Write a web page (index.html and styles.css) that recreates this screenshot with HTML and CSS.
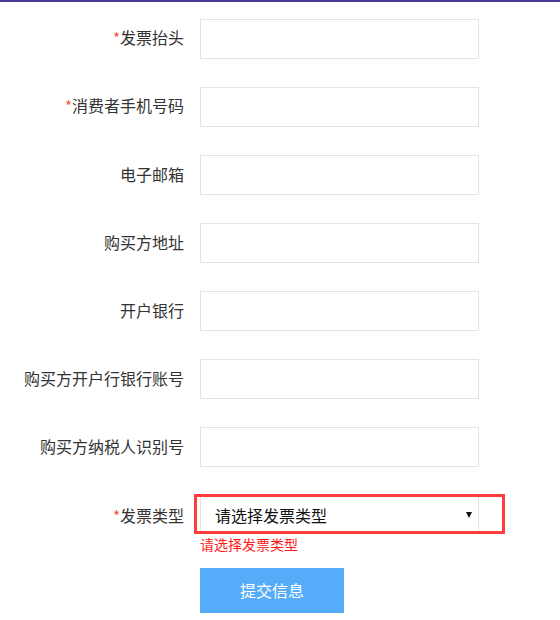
FILE: index.html
```html
<!DOCTYPE html>
<html lang="zh-CN">
<head>
<meta charset="utf-8">
<title>发票信息</title>
<link rel="stylesheet" href="styles.css">
</head>
<body>
<div class="topbar"></div>
<form class="form">
  <div class="row">
    <label class="label"><span class="req">*</span>发票抬头</label>
    <input class="input" type="text">
  </div>
  <div class="row">
    <label class="label"><span class="req">*</span>消费者手机号码</label>
    <input class="input" type="text">
  </div>
  <div class="row">
    <label class="label">电子邮箱</label>
    <input class="input" type="text">
  </div>
  <div class="row">
    <label class="label">购买方地址</label>
    <input class="input" type="text">
  </div>
  <div class="row">
    <label class="label">开户银行</label>
    <input class="input" type="text">
  </div>
  <div class="row">
    <label class="label">购买方开户行银行账号</label>
    <input class="input" type="text">
  </div>
  <div class="row">
    <label class="label">购买方纳税人识别号</label>
    <input class="input" type="text">
  </div>
  <div class="row row-select">
    <label class="label"><span class="req">*</span>发票类型</label>
    <div class="select-wrap">
      <select class="select">
        <option>请选择发票类型</option>
      </select>
      <span class="arrow"></span>
    </div>
  </div>
  <div class="error">请选择发票类型</div>
  <div class="actions">
    <button class="submit" type="button">提交信息</button>
  </div>
</form>
</body>
</html>
```

FILE: styles.css
```css
html, body {
  margin: 0;
  padding: 0;
  background: #ffffff;
}

body {
  font-family: "Microsoft YaHei", "Noto Sans CJK SC", "Noto Sans", sans-serif;
  font-size: 16px;
  color: #333333;
}

.topbar {
  height: 2px;
  background: #453c98;
}

.form {
  margin: 0;
  padding-top: 17px;
}

.row {
  display: flex;
  align-items: center;
  height: 40px;
  margin-bottom: 28px;
}

.row-select {
  margin-top: -1px;
  margin-bottom: 0;
}

.label {
  width: 184px;
  margin-right: 16px;
  padding-bottom: 3px;
  text-align: right;
  flex-shrink: 0;
  color: #333333;
  line-height: 20px;
  white-space: nowrap;
}

.row-select .label {
  padding-bottom: 0;
  margin-top: 2px;
}

.req {
  color: #f5533d;
  font-size: 15px;
}

.input {
  box-sizing: border-box;
  width: 279px;
  height: 40px;
  border: 1px solid #e3e3e3;
  margin: 0;
  padding: 0 10px;
  outline: none;
  font: inherit;
}

.select-wrap {
  position: relative;
  box-sizing: border-box;
  width: 311px;
  height: 40px;
  margin-left: -6px;
  border: 3px solid #ff3b3b;
  padding-left: 3px;
}

.select {
  display: block;
  box-sizing: border-box;
  width: 279px;
  height: 34px;
  margin: 0;
  padding: 2px 0 0 14px;
  border: none;
  border-left: 1px solid #e3e3e3;
  border-right: 1px solid #e3e3e3;
  border-radius: 0;
  background: #ffffff;
  -webkit-appearance: none;
  appearance: none;
  font: inherit;
  color: #111111;
  outline: none;
}

.arrow {
  position: absolute;
  left: 269px;
  top: 15px;
  width: 0;
  height: 0;
  border-left: 3px solid transparent;
  border-right: 3px solid transparent;
  border-top: 6px solid #111111;
}

.error {
  margin-left: 200px;
  font-size: 14px;
  line-height: 21px;
  color: #ff1a1a;
}

.actions {
  margin-left: 200px;
  margin-top: 13px;
}

.submit {
  width: 144px;
  height: 45px;
  border: none;
  border-radius: 0;
  background: #55acf9;
  color: #ffffff;
  font: inherit;
  font-size: 16px;
  padding: 0 0 2px;
  cursor: pointer;
}
```
